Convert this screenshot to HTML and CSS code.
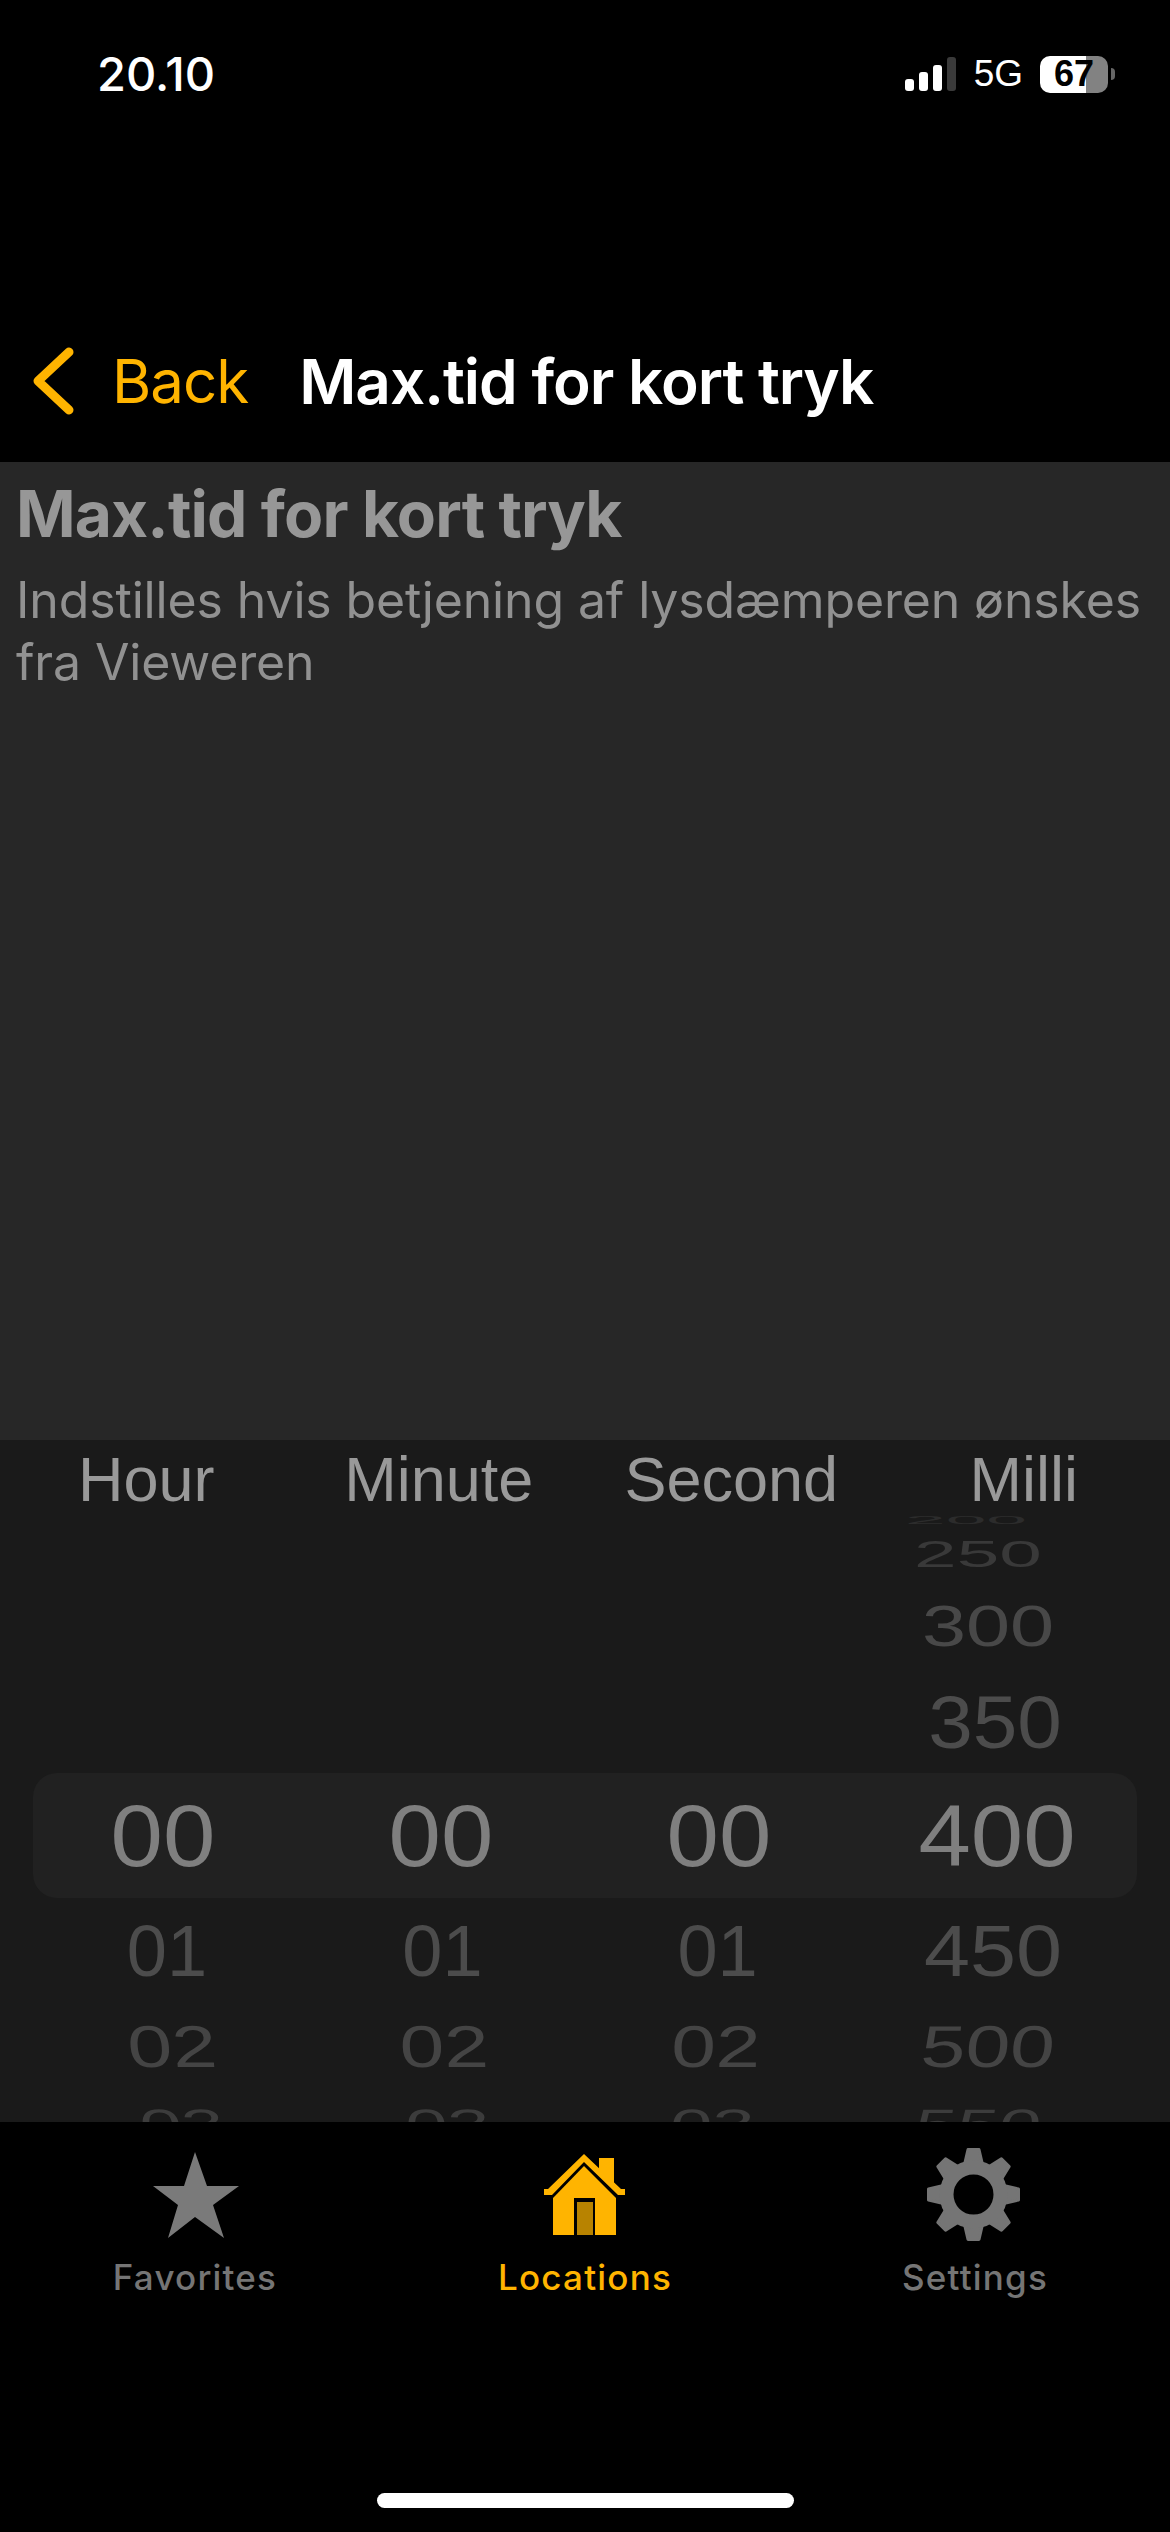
FILE: index.html
```html
<!DOCTYPE html>
<html lang="da">
<head>
    <meta charset="UTF-8">
    <meta name="viewport" content="width=device-width, initial-scale=1.0">
    <title>Max.tid for kort tryk</title>
    <link rel="stylesheet" href="styles.css">
</head>
<body>
    <header class="top">
        <div class="status-bar">
            <span class="clock">20.10</span>
            <div class="status-icons">
                <svg class="signal" width="51" height="34" viewBox="0 0 51 34">
                    <rect x="0" y="22" width="9" height="12" rx="3" fill="#fff"/>
                    <rect x="14" y="15" width="9" height="19" rx="3" fill="#fff"/>
                    <rect x="28" y="8" width="9" height="26" rx="3" fill="#fff"/>
                    <rect x="42" y="0" width="9" height="34" rx="3" fill="#3a3a3a"/>
                </svg>
                <span class="network">5G</span>
                <div class="battery"><span class="battery-level">67</span></div>
                <div class="battery-cap"></div>
            </div>
        </div>
        <nav class="nav-bar">
            <a class="back">
                <svg width="46" height="72" viewBox="0 0 46 72">
                    <path d="M39 7 L8 36 L39 65" fill="none" stroke="#ffb400" stroke-width="9" stroke-linecap="round" stroke-linejoin="round"/>
                </svg>
                <span>Back</span>
            </a>
            <h1>Max.tid for kort tryk</h1>
        </nav>
    </header>

    <main class="content">
        <h2>Max.tid for kort tryk</h2>
        <p>Indstilles hvis betjening af lysdæmperen ønskes fra Vieweren</p>
    </main>

    <section class="picker">
        <div class="picker-labels">
            <span>Hour</span>
            <span>Minute</span>
            <span>Second</span>
            <span>Milli</span>
        </div>
        <div class="wheel">
            <div class="wheel-band"></div>
            <div class="wheel-row r200"><span></span><span></span><span></span><span>200</span></div>
            <div class="wheel-row r250"><span></span><span></span><span></span><span>250</span></div>
            <div class="wheel-row r300"><span></span><span></span><span></span><span>300</span></div>
            <div class="wheel-row r350"><span></span><span></span><span></span><span>350</span></div>
            <div class="wheel-row selected"><span>00</span><span>00</span><span>00</span><span>400</span></div>
            <div class="wheel-row r450"><span>01</span><span>01</span><span>01</span><span>450</span></div>
            <div class="wheel-row r500"><span>02</span><span>02</span><span>02</span><span>500</span></div>
            <div class="wheel-row r550"><span>03</span><span>03</span><span>03</span><span>550</span></div>
        </div>
    </section>

    <footer class="tab-bar">
        <div class="tabs">
            <a class="tab">
                <svg width="88" height="90" viewBox="0 0 88 90">
                    <path d="M44 2 L56 36 L88 36 L62 55 L73 88 L44 67 L17 88 L27 55 L2 36 L33 36 Z" fill="#7a7a7a"/>
                </svg>
                <span>Favorites</span>
            </a>
            <a class="tab active">
                <svg width="88" height="90" viewBox="0 0 88 90">
                    <path d="M58 8 H73 V34 L58 20 Z" fill="#ffb400"/>
                    <path d="M43 4 L80 39 H84 V45 H77 L43 12 L11 45 H3 V39 H7 Z" fill="#ffb400"/>
                    <path d="M43 16 L75 48 V85 H12 V48 Z" fill="#ffb400"/>
                    <rect x="33" y="48" width="21" height="37" fill="#000"/>
                    <rect x="36" y="52" width="16" height="33" fill="#b88300"/>
                </svg>
                <span>Locations</span>
            </a>
            <a class="tab">
                <svg width="92" height="96" viewBox="-44.5 -44.5 92 96">
                    <g fill="#757575" stroke="#757575" stroke-width="3" stroke-linejoin="round">
                        <path id="tooth" d="M-9 -30 L-5.5 -45 H5.5 L9 -30 Z"/>
                        <use href="#tooth" transform="rotate(45)"/>
                        <use href="#tooth" transform="rotate(90)"/>
                        <use href="#tooth" transform="rotate(135)"/>
                        <use href="#tooth" transform="rotate(180)"/>
                        <use href="#tooth" transform="rotate(225)"/>
                        <use href="#tooth" transform="rotate(270)"/>
                        <use href="#tooth" transform="rotate(315)"/>
                    </g>
                    <circle r="27" fill="none" stroke="#757575" stroke-width="14"/>
                </svg>
                <span>Settings</span>
            </a>
        </div>
        <div class="home-indicator"></div>
    </footer>
</body>
</html>
```

FILE: styles.css
```css
* {
    box-sizing: border-box;
}
html, body {
    margin: 0;
    height: 2532px;
    background-color: #000;
}
body {
    width: 1170px;
    display: flex;
    flex-direction: column;
    overflow: hidden;
    font-family: "Liberation Sans", Arial, sans-serif;
}

/* status bar + nav */
.top {
    height: 462px;
    display: flex;
    flex-direction: column;
    justify-content: space-between;
}
.status-bar {
    display: flex;
    justify-content: space-between;
    align-items: center;
    padding: 47px 55px 0 97px;
}
.clock {
    font-family: Inter, sans-serif;
    font-size: 47px;
    font-weight: 500;
    line-height: 54px;
    color: #fff;
}
.status-icons {
    display: flex;
    align-items: center;
}
.signal {
    margin-right: 18px;
}
.network {
    font-size: 37px;
    color: #fff;
    margin-right: 17px;
}
.battery {
    width: 68px;
    height: 37px;
    border-radius: 10px;
    background: linear-gradient(to right, #fff 67%, #828282 67%);
    display: flex;
    justify-content: center;
    align-items: center;
}
.battery-level {
    font-size: 36px;
    font-weight: bold;
    color: #000;
}
.battery-cap {
    width: 4px;
    height: 12px;
    margin-left: 3px;
    border-radius: 0 6px 6px 0;
    background-color: #666;
}
.nav-bar {
    display: flex;
    align-items: center;
    height: 100px;
    margin-bottom: 31px;
    padding-left: 30px;
}
.back {
    display: flex;
    align-items: center;
    gap: 36px;
    color: #ffb400;
}
.back span {
    font-family: Inter, sans-serif;
    font-size: 60px;
    letter-spacing: -1px;
}
.nav-bar h1 {
    margin: 0 0 0 51px;
    font-family: Inter, sans-serif;
    font-size: 62px;
    font-weight: 600;
    letter-spacing: -1px;
    color: #fff;
}

/* description panel */
.content {
    height: 978px;
    padding: 14px 16px;
    background-color: #272727;
    color: #919191;
}
.content h2 {
    margin: 0 0 17px;
    font-family: Inter, sans-serif;
    font-size: 64px;
    font-weight: 700;
    line-height: 76px;
    letter-spacing: -0.85px;
    color: #979797;
}
.content p {
    margin: 0;
    font-family: Inter, sans-serif;
    font-size: 50px;
    line-height: 62px;
    letter-spacing: -0.14px;
}

/* time picker */
.picker {
    height: 682px;
    overflow: hidden;
    background-color: #1a1a1a;
}
.picker-labels {
    display: grid;
    grid-template-columns: repeat(4, 1fr);
    height: 70px;
    padding-top: 4px;
    text-align: center;
    font-size: 63px;
    line-height: 70px;
    color: #999;
}
.wheel {
    position: relative;
    padding: 0 34px 0 24px;
}
.wheel-band {
    position: absolute;
    top: 263px;
    left: 33px;
    width: 1104px;
    height: 125px;
    border-radius: 24px;
    background-color: #212121;
}
.wheel-row {
    position: relative;
    display: grid;
    grid-template-columns: repeat(4, 1fr);
    grid-template-rows: 100%;
    align-items: center;
    text-align: center;
    font-size: 88px;
    line-height: 88px;
    --off: 0px;
    --skew: 0deg;
    --sx: 1;
    --sy: 1;
}
.wheel-row span {
    --lean: 0;
    transform: translateX(calc(var(--off) * var(--lean))) skewX(calc(var(--skew) * var(--lean))) scale(var(--sx), var(--sy));
}
.wheel-row span:nth-child(1) { --lean: 1; }
.wheel-row span:nth-child(2) { --lean: 0.35; }
.wheel-row span:nth-child(3) { --lean: -0.35; }
.wheel-row span:nth-child(4) { --lean: -1; }

.r200 { height: 20px; color: #2c2c2c; --off: 31px; --sx: 0.83; --sy: 0.13; }
.r250 { height: 50px; color: #393939; --off: 19px; --sx: 0.87; --sy: 0.41; }
.r300 { height: 92px; color: #484848; --off: 9px; --sx: 0.9; --sy: 0.65; }
.r350 { height: 101px; color: #4c4c4c; --off: 2px; --sx: 0.91; --sy: 0.84; }
.selected { height: 125px; color: #7f7f7f; --sx: 1.07; }
.r450 { height: 105px; color: #4c4c4c; --off: 4px; --sx: 0.94; --sy: 0.83; }
.r450 span:nth-child(-n+3) { --sx: 0.82; }
.r500 { height: 87px; color: #444; --off: 9px; --skew: 5deg; --sx: 0.91; --sy: 0.67; }
.r550 { height: 70px; color: #3c3c3c; --off: 19px; --skew: 8deg; --sx: 0.86; --sy: 0.5; }

/* tabs */
.tab-bar {
    flex: 1;
    display: flex;
    flex-direction: column;
    align-items: center;
    background-color: #000;
}
.tabs {
    display: grid;
    grid-template-columns: repeat(3, 1fr);
    width: 100%;
    height: 371px;
    padding-top: 28px;
}
.tab {
    display: flex;
    flex-direction: column;
    align-items: center;
    justify-content: space-between;
    height: 148px;
    font-family: Inter, sans-serif;
    font-size: 35px;
    font-weight: 500;
    letter-spacing: 1.2px;
    color: #757575;
}
.tab svg {
    overflow: visible;
}
.tab.active {
    color: #ffb400;
}
.home-indicator {
    width: 417px;
    height: 15px;
    border-radius: 8px;
    background-color: #fff;
}
```
